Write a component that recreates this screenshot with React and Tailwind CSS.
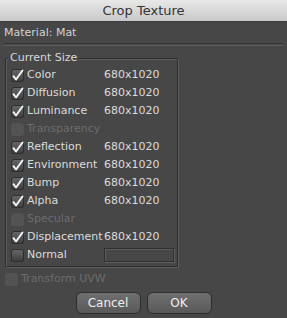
const rows = [
  { label: "Color", on: true, val: "680x1020" },
  { label: "Diffusion", on: true, val: "680x1020" },
  { label: "Luminance", on: true, val: "680x1020" },
  { label: "Transparency", on: false, disabled: true },
  { label: "Reflection", on: true, val: "680x1020" },
  { label: "Environment", on: true, val: "680x1020" },
  { label: "Bump", on: true, val: "680x1020" },
  { label: "Alpha", on: true, val: "680x1020" },
  { label: "Specular", on: false, disabled: true },
  { label: "Displacement", on: true, val: "680x1020" },
  { label: "Normal", on: false, input: true },
];

function Box({ on, disabled }) {
  return (
    <div
      className={
        "relative w-[13px] h-[13px] rounded-[3px] shrink-0 " +
        (disabled
          ? "bg-[#535353]"
          : "bg-gradient-to-b from-[#6a6a6a] to-[#3c3c3c] shadow-[inset_0_0_0_1px_#2e2e2e]")
      }
    >
      {on && (
        <svg viewBox="0 0 13 13" className="absolute left-0 top-0 w-[13px] h-[13px]">
          <path d="M2.5 7.2 L5 10.5 L11.5 1.5" fill="none" stroke="#f2f2f2" strokeWidth="2" strokeLinecap="round" strokeLinejoin="round" />
        </svg>
      )}
    </div>
  );
}

export default function App() {
  return (
    <div className="w-[287px] h-[318px] bg-[#474747] flex flex-col text-[11px] overflow-hidden" style={{ fontFamily: '"Lucida Grande", "DejaVu Sans", "Noto Sans", sans-serif' }}>
      <div className="h-[22px] shrink-0 bg-gradient-to-b from-[#e8e8e8] to-[#c9c9c9] flex items-center justify-center text-[13px] text-[#333333] border-b border-[#3a3a3a]">
        Crop Texture
      </div>
      <div className="px-[4px] pt-[4px] h-[19px] text-[#d2d2d2] flex items-center">Material: Mat</div>
      <div className="mx-[4px] mt-[2px] h-[2px] border-t border-[#363636] shadow-[0_1px_0_#5e5e5e]" />
      <div className="relative ml-[5px] mt-[13px] w-[173px] h-[209px] border border-[#2f2f2f] shadow-[1px_1px_0_#5d5d5d,inset_1px_1px_0_#5d5d5d]">
        <div className="absolute left-[2px] top-[-9px] px-[2px] bg-[#474747] text-[#d8d8d8] leading-[16px]">Current Size</div>
        <div className="flex flex-col pt-[7px] pl-[5px]">
          {rows.map((r) => (
            <div key={r.label} className="h-[18px] flex items-center">
              <Box on={r.on} disabled={r.disabled} />
              <span className={"ml-[3px] w-[77px] " + (r.disabled ? "text-[#6c6c6c]" : "text-[#dcdcdc]")}>{r.label}</span>
              {r.val && <span className="text-[#dcdcdc]">{r.val}</span>}
              {r.input && <div className="w-[70px] h-[14px] border border-[#2f2f2f] shadow-[1px_1px_0_#5d5d5d,inset_1px_1px_0_#5d5d5d]" />}
            </div>
          ))}
        </div>
      </div>
      <div className="h-[18px] mt-[3px] pl-[5px] flex items-center">
        <Box disabled />
        <span className="ml-[3px] text-[#6c6c6c]">Transform UVW</span>
      </div>
      <div className="flex justify-center gap-[6px] mt-[4px]">
        <div className="w-[65px] h-[22px] rounded-[6px] bg-gradient-to-b from-[#707070] to-[#595959] border border-[#2e2e2e] flex items-center justify-center text-[#eeeeee] text-[12px]">Cancel</div>
        <div className="w-[65px] h-[22px] rounded-[6px] bg-gradient-to-b from-[#707070] to-[#595959] border border-[#2e2e2e] flex items-center justify-center text-[#eeeeee] text-[12px]">OK</div>
      </div>
    </div>
  );
}
